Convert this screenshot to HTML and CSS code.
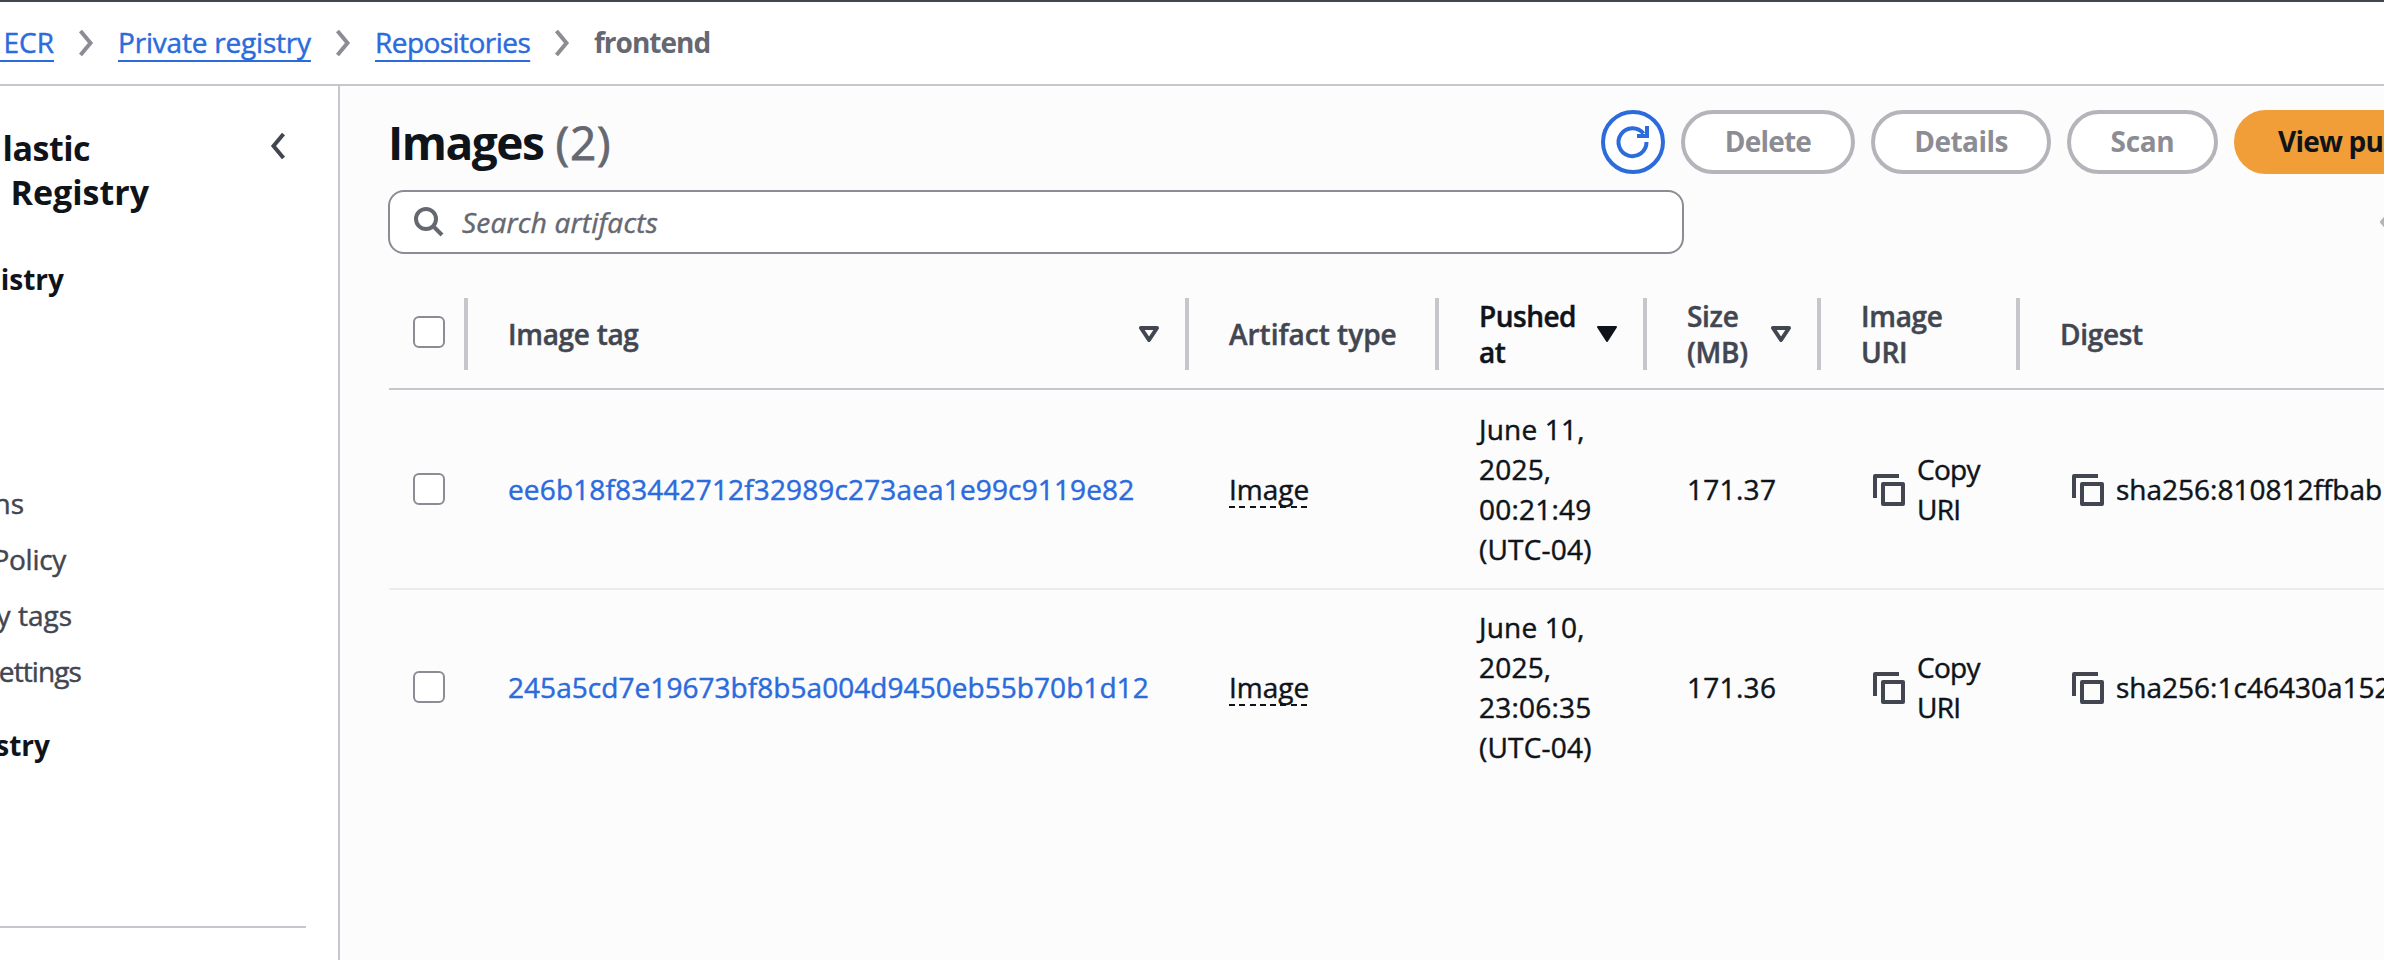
FILE: index.html
```html
<!DOCTYPE html>
<html lang="en">
<head>
<meta charset="utf-8">
<title>frontend - Private registry - Amazon ECR</title>
<link rel="stylesheet" href="styles.css">
</head>
<body>
<svg class="defs" width="0" height="0" aria-hidden="true">
  <symbol id="chevron" viewBox="0 0 16 28"><path d="M2.5 2 12.5 14 2.5 26" fill="none" stroke="currentColor" stroke-width="4"/></symbol>
  <symbol id="copy" viewBox="0 0 32 32"><path d="M2 24V2h24M10 10h20v20H10z" fill="none" stroke="currentColor" stroke-width="4" stroke-linejoin="round"/></symbol>
  <symbol id="sort" viewBox="0 0 20 16"><path d="M2 2h16l-8 12z" fill="none" stroke="currentColor" stroke-width="4" stroke-linejoin="round"/></symbol>
  <symbol id="sorted" viewBox="0 0 20 16"><path d="M1 1h18l-9 14z" fill="currentColor" stroke="currentColor" stroke-width="2" stroke-linejoin="round"/></symbol>
</svg>

<header class="topbar">
  <nav class="breadcrumbs">
    <a class="crumb crumb-ecr">&nbsp;ECR</a>
    <svg class="crumb-sep"><use href="#chevron"/></svg>
    <a class="crumb crumb-registry">Private registry</a>
    <svg class="crumb-sep"><use href="#chevron"/></svg>
    <a class="crumb crumb-repos">Repositories</a>
    <svg class="crumb-sep"><use href="#chevron"/></svg>
    <span class="crumb-current">frontend</span>
  </nav>
</header>

<div class="layout">
  <aside class="sidebar">
    <div class="sidebar-head">
      <h2 class="service"><span class="service-line line-a">lastic</span><span class="service-line line-b">Registry</span></h2>
      <svg class="collapse" viewBox="0 0 16 28"><path d="M13.500 2 3.500 14l10 12" fill="none" stroke="currentColor" stroke-width="4"/></svg>
    </div>
    <ul class="nav">
      <li class="nav-title nav-private">istry</li>
      <li class="nav-item nav-first">ns</li>
      <li class="nav-item nav-policy">Policy</li>
      <li class="nav-item nav-tags">y tags</li>
      <li class="nav-item nav-settings">ettings</li>
      <li class="nav-title nav-public">stry</li>
    </ul>
    <hr class="nav-rule">
  </aside>

  <main class="content">
    <div class="title-row">
      <h1 class="title"><span class="title-text">Images</span><span class="count">(2)</span></h1>
      <div class="actions">
        <button class="refresh" aria-label="Refresh"><svg width="34" height="34" viewBox="0 0 34 34"><path d="M30.500 17A14 14 0 1 1 27.500 8.500M31 1v10H21" fill="none" stroke="currentColor" stroke-width="4"/></svg></button>
        <button class="btn btn-delete">Delete</button>
        <button class="btn btn-details">Details</button>
        <button class="btn btn-scan">Scan</button>
        <button class="btn btn-primary">View push commands</button>
      </div>
    </div>
    <div class="filter-row">
      <div class="search">
        <svg width="30" height="30" viewBox="0 0 30 30"><circle cx="12" cy="12" r="10" fill="none" stroke="currentColor" stroke-width="4"/><path d="M19 19l9 9" stroke="currentColor" stroke-width="4"/></svg>
        <span class="placeholder">Search artifacts</span>
      </div>
      <svg class="page-prev" viewBox="0 0 16 28"><path d="M14 2 3 14l11 12" fill="none" stroke="currentColor" stroke-width="4" stroke-linejoin="round"/></svg>
    </div>

    <div class="table">
      <div class="row head">
        <div class="th th-check"><span class="checkbox"></span></div>
        <div class="th">Image tag<svg class="sort"><use href="#sort"/></svg></div>
        <div class="th th-type">Artifact type</div>
        <div class="th th-active"><span>Pushed<br>at</span><svg class="sort"><use href="#sorted"/></svg></div>
        <div class="th"><span>Size<br>(MB)</span><svg class="sort"><use href="#sort"/></svg></div>
        <div class="th"><span>Image<br>URI</span></div>
        <div class="th th-last">Digest</div>
      </div>
      <div class="row row-first">
        <div class="td td-check"><span class="checkbox"></span></div>
        <div class="td"><a class="tag tag-a">ee6b18f83442712f32989c273aea1e99c9119e82</a></div>
        <div class="td"><span class="type">Image</span></div>
        <div class="td pushed"><span>June 11,<br>2025,<br>00:21:49<br>(UTC-04)</span></div>
        <div class="td size">171.37</div>
        <div class="td copy"><svg class="copy-icon"><use href="#copy"/></svg><span class="copy-text">Copy<br>URI</span></div>
        <div class="td copy"><svg class="copy-icon"><use href="#copy"/></svg><span>sha256:810812ffbabb</span></div>
      </div>
      <div class="row row-last">
        <div class="td td-check"><span class="checkbox"></span></div>
        <div class="td"><a class="tag">245a5cd7e19673bf8b5a004d9450eb55b70b1d12</a></div>
        <div class="td"><span class="type">Image</span></div>
        <div class="td pushed"><span>June 10,<br>2025,<br>23:06:35<br>(UTC-04)</span></div>
        <div class="td size">171.36</div>
        <div class="td copy"><svg class="copy-icon"><use href="#copy"/></svg><span class="copy-text">Copy<br>URI</span></div>
        <div class="td copy"><svg class="copy-icon"><use href="#copy"/></svg><span>sha256:1c46430a152</span></div>
      </div>
    </div>
  </main>
</div>
</body>
</html>
```
FILE: styles.css
```css
* { box-sizing: border-box; }
body {
  margin: 0;
  width: 2384px;
  height: 960px;
  overflow: hidden;
  background: #fff;
  color: #0f141a;
  font: 400 28px/40px "Open Sans", "Noto Sans", sans-serif;
  -webkit-text-stroke: 0.45px;
}
svg { display: block; flex: none; overflow: visible; }
.defs { position: absolute; }

/* Breadcrumb bar */
.topbar {
  height: 86px;
  border-top: 2px solid #424650;
  border-bottom: 2px solid #c6c6cd;
  padding-bottom: 2px;
  overflow: hidden;
}
.breadcrumbs { display: flex; align-items: center; height: 80px; white-space: nowrap; }
.crumb {
  color: #2b6bdc;
  flex: none;
  text-decoration: underline 2px;
  text-underline-offset: 7px;
  text-decoration-skip-ink: none;
}
.crumb-ecr { width: 54px; display: flex; justify-content: flex-end; }
.crumb-registry { width: 193px; letter-spacing: -0.2px; }
.crumb-repos { width: 155px; letter-spacing: -0.55px; }
.crumb-sep { width: 16px; height: 28px; margin: 2px 24px 0; color: #8c8c94; }
.crumb-current { color: #656871; font-weight: 700; letter-spacing: -1px; -webkit-text-stroke: 0; }

/* Page frame */
.layout { display: flex; height: 874px; }
.sidebar { width: 340px; flex: none; border-right: 2px solid #c6c6cd; padding-top: 40px; overflow: hidden; }
.content { flex: 1; min-width: 0; background: #fcfcfd; padding: 24px 0 0 48px; overflow: hidden; }

/* Sidebar */
.sidebar-head { display: flex; justify-content: space-between; height: 88px; padding-right: 52px; }
.service { margin: 0; font-size: 34px; line-height: 44px; font-weight: 700; -webkit-text-stroke: 0; }
.service-line { display: flex; justify-content: flex-end; white-space: nowrap; }
.line-a { width: 90px; letter-spacing: -0.5px; }
.line-b { width: 149px; }
.collapse { width: 16px; height: 28px; margin-top: 6px; color: #424650; }
.nav { list-style: none; margin: 45px 0 0; padding: 0; display: flex; flex-direction: column; gap: 16px; }
.nav-title, .nav-item { display: flex; justify-content: flex-end; white-space: nowrap; }
.nav-title { font-weight: 700; -webkit-text-stroke: 0; }
.nav-item { color: #424650; }
.nav-private { width: 64px; }
.nav-first { width: 24px; margin-top: 168px; }
.nav-policy { width: 66px; letter-spacing: -0.3px; }
.nav-tags { width: 72px; }
.nav-settings { width: 81px; letter-spacing: -0.9px; }
.nav-public { width: 50px; margin-top: 18px; }
.nav-rule { width: 306px; height: 2px; margin: 161px 0 0; border: 0; background: #c6c6cd; }

/* Title and actions */
.title-row { display: flex; align-items: center; height: 64px; }
.title { display: flex; flex: 0 0 1213px; gap: 12px; margin: 0; font-size: 46px; line-height: 60px; }
.title-text { letter-spacing: -1.45px; -webkit-text-stroke: 0; }
.count { font-weight: 400; letter-spacing: 0.8px; color: #656871; -webkit-text-stroke: 0.8px; }
.actions { display: flex; gap: 16px; flex: none; }
.btn, .refresh {
  height: 64px;
  flex: none;
  border-radius: 32px;
  border: 4px solid #b4b4bb;
  background: #fff;
  color: #8c8c94;
  font: 700 28px/40px "Open Sans", "Noto Sans", sans-serif;
  -webkit-text-stroke: 0;
  letter-spacing: -0.8px;
  padding: 0 0 2px;
  white-space: nowrap;
}
.refresh { width: 64px; display: grid; place-items: center; border-color: #2b6bdc; color: #2b6bdc; padding: 0; }
.btn-delete { width: 174px; }
.btn-details { width: 180px; letter-spacing: -0.55px; }
.btn-scan { width: 151px; letter-spacing: -0.3px; }
.btn-primary { padding: 0 40px 2px; border-color: #f19e38; background: #f19e38; color: #0f141a; }

/* Search */
.filter-row { display: flex; align-items: center; justify-content: space-between; margin-top: 16px; }
.search {
  display: flex;
  align-items: center;
  gap: 18px;
  width: 1296px;
  height: 64px;
  padding: 0 24px;
  border: 2px solid #8c8c94;
  border-radius: 16px;
  background: #fff;
  color: #656871;
}
.placeholder { font-style: italic; letter-spacing: 0.2px; }
.page-prev { width: 16px; height: 28px; margin-right: -11px; color: #b4b4bb; }

/* Table */
.table { margin: 26px 0 0 1px; }
.row { display: grid; grid-template-columns: 79px 721px 250px 208px 174px 199px 364px; }
.head { height: 110px; border-bottom: 2px solid #c6c6cd; align-items: center; }
.th {
  display: flex;
  align-items: center;
  justify-content: space-between;
  height: 72px;
  padding: 0 26px 0 40px;
  border-right: 4px solid #c6c6cd;
  color: #424650;
  font-weight: 600;
  line-height: 36px;
  letter-spacing: -0.3px;
  white-space: nowrap;
}
.th-type { letter-spacing: 0; }
.th-active { color: #0f141a; letter-spacing: -0.5px; }
.th-last { border-right: 0; }
.th-check { padding: 0 0 4px 24px; }
.sort { width: 20px; height: 16px; }
.checkbox { width: 32px; height: 32px; border: 2px solid #8c8c94; border-radius: 6px; background: #fff; }
.row-first { height: 200px; border-bottom: 2px solid #ebebf0; }
.row-last { height: 194px; }
.td { display: flex; align-items: center; padding-left: 40px; white-space: nowrap; }
.td.td-check { padding-left: 24px; }
.tag { color: #2b6bdc; letter-spacing: 0.05px; }
.tag-a { letter-spacing: 0.14px; }
.type {
  line-height: 38px;
  background: repeating-linear-gradient(90deg, #0f141a 0 6px, transparent 6px 10.3px) left bottom / 100% 2px no-repeat;
}
.pushed { letter-spacing: 0.2px; }
.size { letter-spacing: 0.3px; }
.td.copy { padding-left: 52px; gap: 12px; }
.copy-icon { width: 32px; height: 32px; margin-top: 2px; color: #424650; }
.copy-text { letter-spacing: -0.7px; }
```
